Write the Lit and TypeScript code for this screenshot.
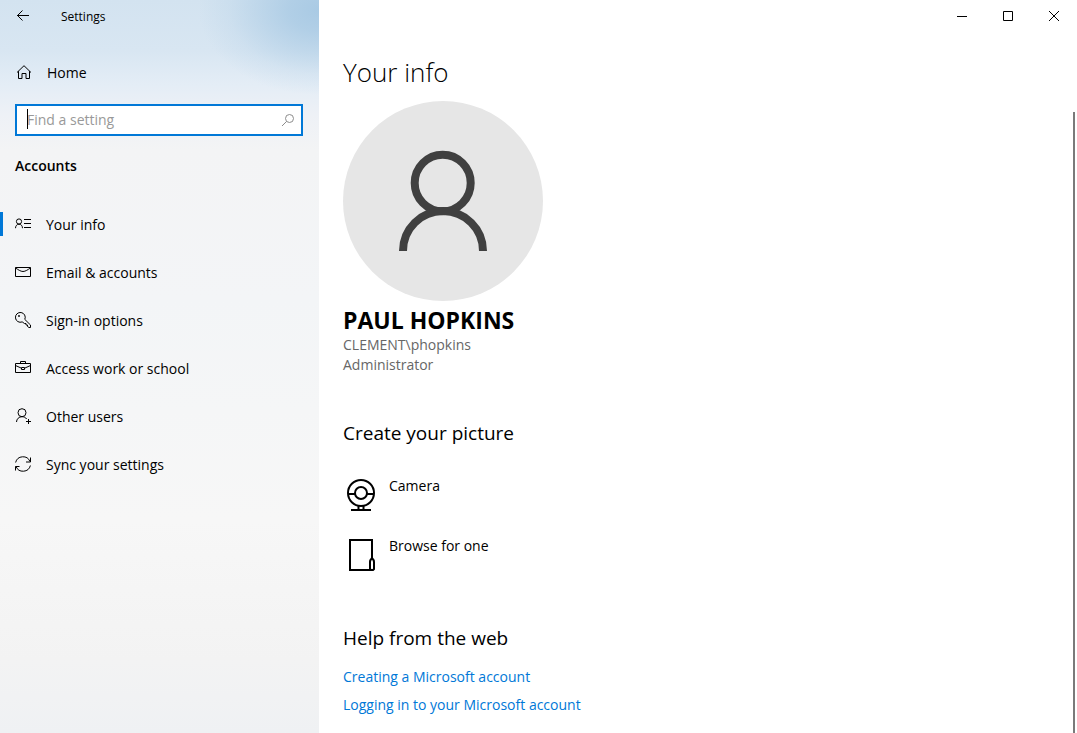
import { LitElement, html, css, svg } from "lit";
import { customElement, state } from "lit/decorators.js";
import { classMap } from "lit/directives/class-map.js";

interface NavItem {
  id: string;
  label: string;
}

const NAV: NavItem[] = [
  { id: "info", label: "Your info" },
  { id: "mail", label: "Email & accounts" },
  { id: "key", label: "Sign-in options" },
  { id: "work", label: "Access work or school" },
  { id: "users", label: "Other users" },
  { id: "sync", label: "Sync your settings" },
];

const GLYPHS: Record<string, unknown> = {
  info: svg`<circle cx="4" cy="5.500" r="2.600"/><path d="M.5 12.200C.5 9.800 2 8.200 4 8.200S7.500 9.800 7.500 12.200M9 3.500h7M9 7.500h7M9 11.500h7"/>`,
  mail: svg`<path d="M.5 3.500h15v9H.5zM.5 4C3 5.500 5.500 7.500 8 7.500S13 5.500 15.500 4"/>`,
  key: svg`<path d="M9.800 7.400A4.900 4.900 0 1 0 7.200 9.900L9.500 11.500H11V13h1.500v1.500L14 15.500h1.500V13z"/><circle cx="4" cy="4" r=".6"/>`,
  work: svg`<path d="M.5 3.500h15v9H.5zM5.500 3.500v-2h5v2M.5 5.500 6 8M15.500 5.500 10 8M6.500 7.500h3v2h-3z"/>`,
  users: svg`<circle cx="7" cy="4.700" r="4"/><path d="M1.500 14C1.500 11 4 8.700 7 8.700c1.900 0 3.600.8 4.700 2.300M13.500 11v5M11 13.500h5"/>`,
  sync: svg`<path d="M.6 6.500A7.600 7.600 0 0 1 15 5.500M15.500 1.500v4.500h-4.500M15.400 9.500A7.600 7.600 0 0 1 1 10.500M.5 14.500V10.500h4"/>`,
};

@customElement("app-root")
export class AppRoot extends LitElement {
  static styles = css`
    :host {
      display: grid;
      grid-template-columns: 319px 1fr;
      min-height: 100vh;
      background: #fff;
      color: #000;
      font: 14px/20px "Open Sans", "Noto Sans", sans-serif;
    }
    * {
      box-sizing: border-box;
    }
    button {
      border: 0;
      padding: 0;
      background: none;
      color: inherit;
      font: inherit;
      text-align: left;
    }
    h1, h2, p, ul {
      margin: 0;
      padding: 0;
    }
    svg {
      display: block;
      flex: none;
      fill: none;
      stroke: currentColor;
    }
    .side {
      background:
        radial-gradient(ellipse 120px 85px at 100% 10px, #a9cae4 0%, #a9cae4d0 25%, #a9cae480 50%, #a9cae430 75%, #a9cae400 100%),
        linear-gradient(#d3e3f0 0, #d8e6f2 50px, #e4edf6 85px, #eef1f6 115px, #f3f4f5 150px, #f3f5f7 300px, #f7f7f7 520px, #f3f3f3 660px, #eff1f3 100%);
    }
    .bar {
      display: flex;
      align-items: center;
      height: 32px;
      font-size: 12px;
    }
    .bar span, .home span, .item span {
      padding-top: 2px;
    }
    .back {
      display: grid;
      place-items: center;
      width: 46px;
      height: 32px;
      margin-right: 15px;
    }
    .home {
      display: flex;
      align-items: center;
      gap: 15px;
      width: 100%;
      height: 48px;
      margin: 16px 0 8px;
      padding-left: 16px;
    }
    .search {
      position: relative;
      display: flex;
      align-items: center;
      height: 32px;
      margin: 0 16px 0 15px;
      padding: 0 6px 0 10px;
      border: 2px solid #0078d7;
      background: #fff;
      color: #8c8c8c;
    }
    .search input {
      flex: 1;
      min-width: 0;
      border: 0;
      padding: 0;
      outline: 0;
      background: none;
      color: #000;
      font: inherit;
    }
    .search input::placeholder {
      color: #999;
      opacity: 1;
    }
    .caret {
      position: absolute;
      left: 10px;
      top: 3px;
      width: 1px;
      height: 20px;
      background: #000;
    }
    .group {
      padding: 20px 15px 24px;
      font-size: 14px;
      line-height: 20px;
      font-weight: 600;
    }
    .nav {
      list-style: none;
    }
    .item {
      display: flex;
      align-items: center;
      gap: 15px;
      width: 100%;
      height: 48px;
    }
    .item::before {
      content: "";
      width: 3px;
      height: 24px;
      margin-right: -3px;
    }
    .item.on::before {
      background: #0078d7;
    }
    .main {
      display: flex;
      flex-direction: column;
      min-width: 0;
    }
    .win {
      display: flex;
      justify-content: flex-end;
      height: 32px;
    }
    .win button {
      display: grid;
      place-items: center;
      width: 46px;
    }
    .body {
      display: flex;
      flex: 1;
    }
    .content {
      flex: 1;
      padding: 20px 24px 18px;
    }
    .thumb {
      width: 2px;
      margin: 80px 2px 0 0;
      background: #7a7a7a;
    }
    h1 {
      font-size: 26px;
      line-height: 40px;
      font-weight: 300;
    }
    .avatar {
      margin-top: 9px;
      color: #404040;
    }
    .name {
      padding-top: 4px;
      font-size: 23px;
      line-height: 30px;
      font-weight: 700;
    }
    .meta {
      color: #666;
    }
    .main h2 {
      font-size: 19px;
      line-height: 28px;
      font-weight: 400;
    }
    .create {
      margin-top: 44px;
    }
    .picks {
      display: grid;
      gap: 20px;
      margin-top: 29px;
    }
    .pick {
      display: flex;
      gap: 10px;
      height: 40px;
    }
    .help {
      margin-top: 48px;
    }
    .links {
      display: grid;
      justify-items: start;
      gap: 8px;
      margin-top: 15px;
    }
    .links a {
      color: #0078d7;
      text-decoration: none;
    }
  `;

  @state() private current = "info";

  render() {
    return html`
      <aside class="side">
        <div class="bar">
          <button class="back" aria-label="Back">
            <svg width="14" height="12" viewBox="0 0 14 12"><path d="M13 5.500H1M6.500.5l-5 5 5 5" /></svg>
          </button>
          <span>Settings</span>
        </div>
        <button class="home">
          <svg width="16" height="16" viewBox="0 0 16 16">
            <path d="M1 8.500 8 1.700l7 6.800M2.500 7.200v7.300h3.500v-5h4v5h3.500V7.200" />
          </svg>
          <span>Home</span>
        </button>
        <div class="search">
          <input type="text" aria-label="Find a setting" placeholder="Find a setting" />
          <span class="caret"></span>
          <svg width="14" height="14" viewBox="0 0 14 14"><circle cx="8.500" cy="5.500" r="4" /><path d="M5.600 8.400 1 13" /></svg>
        </div>
        <h2 class="group">Accounts</h2>
        <nav>
          <ul class="nav">
            ${NAV.map(
              (n) => html`<li>
                <button
                  class=${classMap({ item: true, on: n.id === this.current })}
                  @click=${() => (this.current = n.id)}
                >
                  <svg width="16" height="16" viewBox="0 0 16 16">${GLYPHS[n.id]}</svg>
                  <span>${n.label}</span>
                </button>
              </li>`
            )}
          </ul>
        </nav>
      </aside>
      <main class="main">
        <div class="win">
          <button aria-label="Minimize"><svg width="10" height="10" viewBox="0 0 10 10"><path d="M0 5.500h10" /></svg></button>
          <button aria-label="Maximize"><svg width="10" height="10" viewBox="0 0 10 10"><path d="M.5.5h9v9h-9z" /></svg></button>
          <button aria-label="Close"><svg width="10" height="10" viewBox="0 0 10 10"><path d="M0 0l10 10M10 0 0 10" /></svg></button>
        </div>
        <div class="body">
          <div class="content">
            <h1>Your info</h1>
            <svg class="avatar" width="200" height="200" viewBox="0 0 200 200" role="img" aria-label="Account picture">
              <circle cx="100" cy="100" r="100" fill="#e6e6e6" stroke="none" />
              <g stroke-width="8">
                <ellipse cx="99.700" cy="82" rx="28" ry="28.300" />
                <path d="M60 150a40 40 0 0 1 80 0" />
              </g>
            </svg>
            <p class="name">PAUL HOPKINS</p>
            <p class="meta">CLEMENT\\phopkins</p>
            <p class="meta">Administrator</p>
            <h2 class="create">Create your picture</h2>
            <div class="picks">
              <button class="pick">
                <svg width="36" height="40" viewBox="0 0 36 40" stroke-width="2">
                  <circle cx="18" cy="17" r="13" /><circle cx="18" cy="17" r="6" />
                  <path d="M5 18h7M24 18h7M15.500 30v3M20.500 30v3M8 34h20" />
                </svg>
                <span>Camera</span>
              </button>
              <button class="pick">
                <svg width="36" height="40" viewBox="0 0 36 40" stroke-width="2">
                  <path d="M29 22V4H7v30h21M29 22c-1 1-2 2-2 4v7l1 1h2l1-1v-7c0-2-1-3-2-4z" />
                </svg>
                <span>Browse for one</span>
              </button>
            </div>
            <h2 class="help">Help from the web</h2>
            <div class="links">
              <a href="#create">Creating a Microsoft account</a>
              <a href="#login">Logging in to your Microsoft account</a>
            </div>
          </div>
          <div class="thumb"></div>
        </div>
      </main>
    `;
  }
}
